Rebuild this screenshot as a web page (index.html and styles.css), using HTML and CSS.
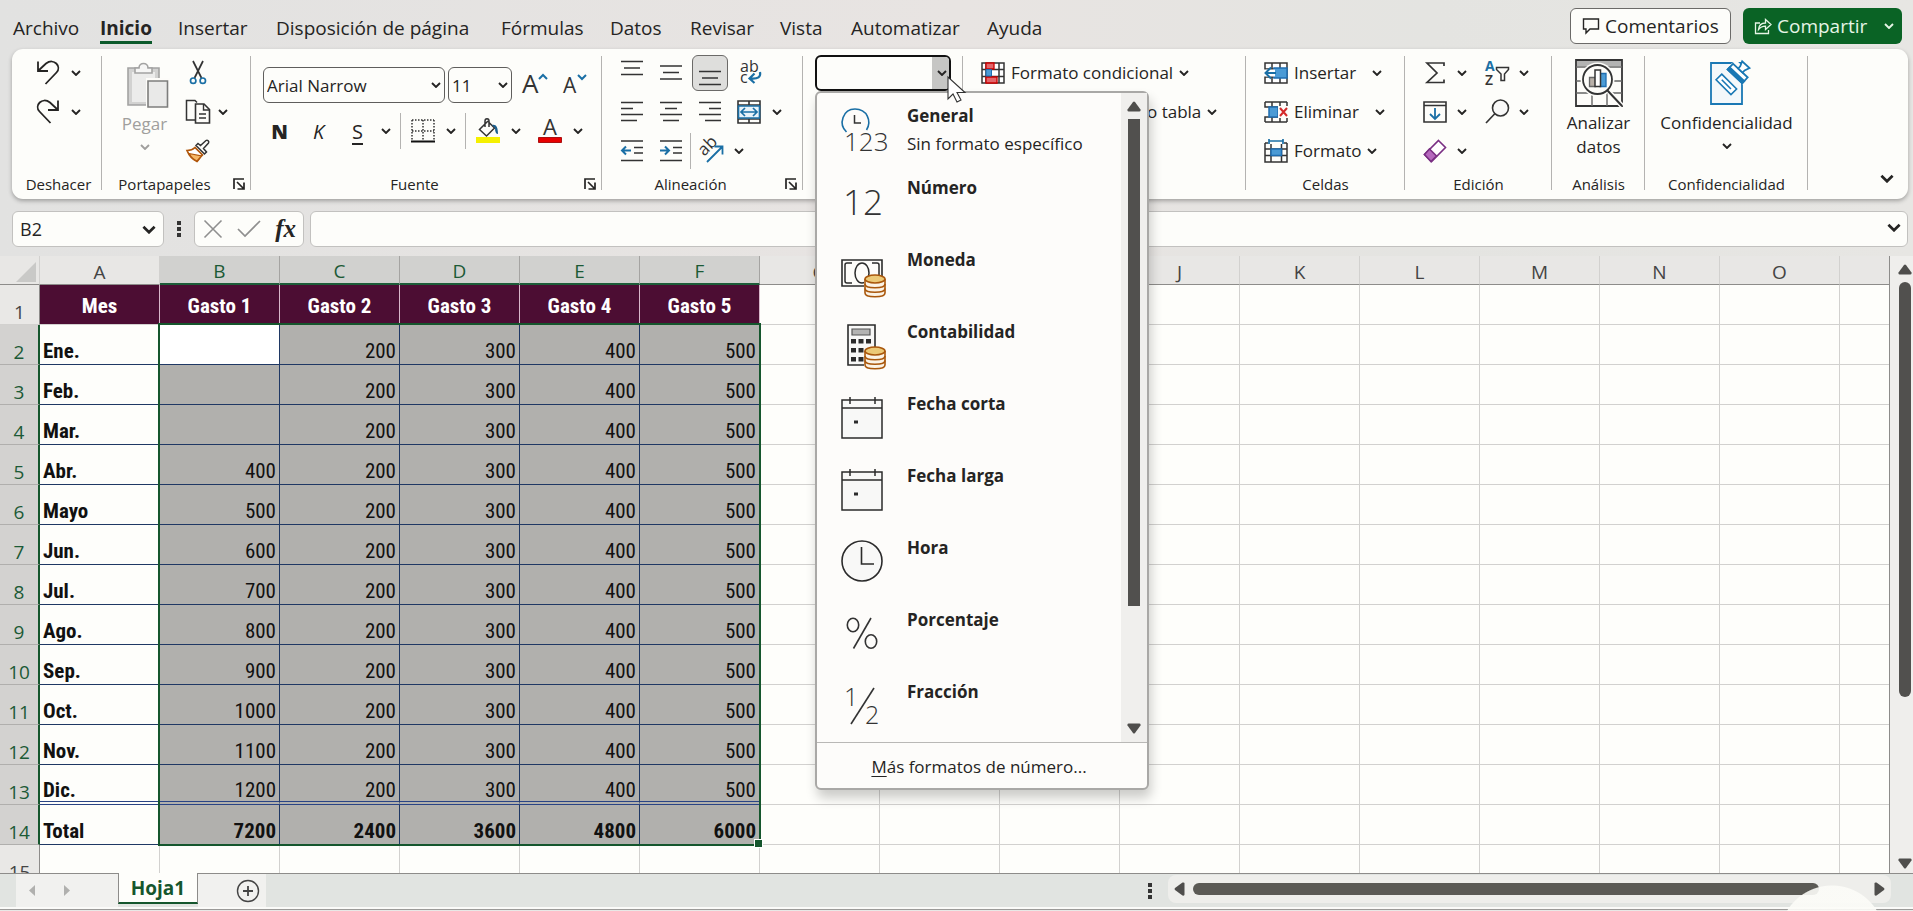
FILE: index.html
```html
<!DOCTYPE html>
<html lang="es">
<head>
  <meta charset="UTF-8" />
  <meta name="viewport" content="width=device-width, initial-scale=1.0" />
  <title>Gastos - Excel</title>
  <link rel="stylesheet" href="styles.css">
</head>
<body>
  <svg class="sprite" width="0" height="0">
    <symbol id="chev" viewBox="0 0 10 6"><path d="M1 1l4 4 4-4" fill="none" stroke="currentColor" stroke-width="1.9"/></symbol>
    <symbol id="launch" viewBox="0 0 12 12"><path d="M1 11V1h10M4 4l6.5 6.5M11 4.500V11H4.500" fill="none" stroke="currentColor" stroke-width="1.7"/></symbol>
    <symbol id="coins" viewBox="0 0 22 24">
      <path d="M1 5v14c0 5 20 5 20 0V5" fill="#fdfcf9" stroke="#fdfcf9" stroke-width="3"/>
      <path d="M1 5v14c0 5 20 5 20 0V5" fill="#fbf3e6" stroke="#a9570c" stroke-width="1.6"/>
      <path d="M1 10c0 5 20 5 20 0M1 14.500c0 5 20 5 20 0" fill="none" stroke="#a9570c" stroke-width="1.6"/>
      <ellipse cx="11" cy="5" rx="10" ry="4" fill="#ecc977" stroke="#a9570c" stroke-width="1.6"/>
    </symbol>
    <symbol id="calendar" viewBox="0 0 46 46">
      <path d="M1 4h40v38H1z" fill="#f8f8f7" stroke="#2b2b2b" stroke-width="1.500"/>
      <path d="M1 12h40M9 1v7M34 1v7" stroke="#2b2b2b" stroke-width="1.500"/>
      <path d="M13 24.500h4v3h-4z" fill="#2b2b2b"/>
    </symbol>
  </svg>

  <header class="topbar">
    <nav class="tabs">
      <a href="#">Archivo</a>
      <a href="#" class="active"><span>Inicio</span></a>
      <a href="#">Insertar</a>
      <a href="#">Disposición de página</a>
      <a href="#">Fórmulas</a>
      <a href="#">Datos</a>
      <a href="#">Revisar</a>
      <a href="#">Vista</a>
      <a href="#">Automatizar</a>
      <a href="#">Ayuda</a>
    </nav>
    <button class="comments">
      <svg width="18" height="18" viewBox="0 0 18 18"><path d="M1.500 2h15v10H8l-4 4v-4H1.500z" fill="none" stroke="currentColor" stroke-width="1.400"/></svg>
      Comentarios
    </button>
    <button class="share">
      <svg width="18" height="18" viewBox="0 0 18 18"><path d="M6 6H1.500v10.500h13V13M4.500 12.500c.5-5 3.500-6.500 7-6.500v-3.500l5.500 5-5.500 5V9.200c-3 0-5 .8-7 3.300z" fill="none" stroke="currentColor" stroke-width="1.300"/></svg>
      Compartir
      <svg class="chev" width="10" height="6"><use href="#chev"/></svg>
    </button>
  </header>

  <section class="ribbon">
    <div class="group g-undo">
      <div class="group-body">
        <div class="row">
          <button class="ico" aria-label="Deshacer"><svg width="24" height="26" viewBox="0 0 24 26"><path d="M2 1.500V11h10M2.500 10.500L10 3.500c8-6 16 3 10.500 9L9.500 24" fill="none" stroke="currentColor" stroke-width="1.800"/></svg></button>
          <button class="drop" aria-label="Más deshacer"><svg class="chev" width="10" height="6"><use href="#chev"/></svg></button>
        </div>
        <div class="row">
          <button class="ico" aria-label="Rehacer"><svg width="24" height="26" viewBox="0 0 24 26"><path d="M22 1.500V11H12M21.500 10.500L14 3.500C6-2.500-2 6.500 3.500 12.500L14.500 24" fill="none" stroke="currentColor" stroke-width="1.800"/></svg></button>
          <button class="drop" aria-label="Más rehacer"><svg class="chev" width="10" height="6"><use href="#chev"/></svg></button>
        </div>
      </div>
      <div class="group-label"><span>Deshacer</span></div>
    </div>

    <div class="group g-clip">
      <div class="group-body side">
        <button class="big disabled">
          <svg width="48" height="46" viewBox="-6 0 48 46">
            <path d="M1 6h31v37H1z" fill="#d2d2d1" stroke="#a3a3a2" stroke-width="1.600"/>
            <path d="M5 10h23v30H5z" fill="#ececeb"/>
            <path d="M8 11V6h4c0-6 9-6 9 0h4v5z" fill="#f6f6f5" stroke="#a3a3a2" stroke-width="1.600"/>
            <path d="M21 18h20v27H21z" fill="#e9e9e8" stroke="#fdfcf9" stroke-width="4"/>
            <path d="M21 19h19.500v26H21z" fill="#e9e9e8" stroke="#7d7d7c" stroke-width="1.600"/>
          </svg>
          <span>Pegar</span>
          <svg class="chev" width="10" height="6"><use href="#chev"/></svg>
        </button>
        <div class="stack">
          <div class="row">
            <button class="ico" aria-label="Cortar"><svg width="18" height="26" viewBox="0 0 18 26"><path d="M4 1l8.500 17M14 1L5.500 18" stroke="#333" stroke-width="1.700"/><g fill="none" stroke="#1a6fa5" stroke-width="1.700"><circle cx="4.200" cy="20.700" r="2.700"/><circle cx="13.800" cy="20.700" r="2.700"/></g></svg></button>
          </div>
          <div class="row">
            <button class="ico" aria-label="Copiar"><svg width="26" height="26" viewBox="0 0 26 26"><path d="M10 21H1.500V1.500H10l2 2" fill="none" stroke="#333" stroke-width="1.500"/><path d="M10.500 5H19l5.500 5.500V24h-14z" fill="#fdfcf9" stroke="#333" stroke-width="1.600"/><path d="M18.500 5v6h6M14 15h7M14 19h7" fill="none" stroke="#333" stroke-width="1.400"/></svg></button>
            <button class="drop" aria-label="Más copiar"><svg class="chev" width="10" height="6"><use href="#chev"/></svg></button>
          </div>
          <div class="row">
            <button class="ico" aria-label="Copiar formato"><svg width="24" height="24" viewBox="0 0 24 24"><path d="M1 11.500c3.500 0 6-1 8-3l7.500 7.500c-2 2-3 3.500-5.500 6.500-4.500-2-8-6-10-11z" fill="#fff" stroke="#b0560a" stroke-width="1.700"/><path d="M3 14.500l12.500 2.500L11 22c-3.500-1.500-6-4-8-7.500z" fill="#f6b868" stroke="#b0560a" stroke-width="1.200"/><path d="M10 6.500l8.500 8.500 2-2-3-3.500 5-5.500c1-1.500-1-3.500-2.500-2.500l-5.500 5-2.500-2z" fill="#fdfcf9" stroke="#333" stroke-width="1.500"/></svg></button>
          </div>
        </div>
      </div>
      <div class="group-label"><span>Portapapeles</span><button class="launch" aria-label="Opciones de portapapeles"><svg width="12" height="12"><use href="#launch"/></svg></button></div>
    </div>

    <div class="group g-font">
      <div class="group-body font-body">
        <div class="font-row first">
          <div class="combo font-name">
            <input type="text" value="Arial Narrow" aria-label="Fuente">
            <button aria-label="Lista de fuentes"><svg class="chev" width="10" height="6"><use href="#chev"/></svg></button>
          </div>
          <div class="combo font-size">
            <input type="text" value="11" aria-label="Tamaño">
            <button aria-label="Lista de tamaños"><svg class="chev" width="10" height="6"><use href="#chev"/></svg></button>
          </div>
          <button class="ico" aria-label="Aumentar fuente"><svg width="28" height="26" viewBox="0 0 28 26"><text x="1" y="21" font-size="26">A</text><path d="M18 7l4-4 4 4" fill="none" stroke="#1a6fa5" stroke-width="2"/></svg></button>
          <button class="ico" aria-label="Reducir fuente"><svg width="28" height="26" viewBox="0 0 28 26"><text x="3" y="21" font-size="21">A</text><path d="M18 3l4 4 4-4" fill="none" stroke="#1a6fa5" stroke-width="2"/></svg></button>
        </div>
        <div class="font-row">
          <button class="ico letter bold">N</button>
          <button class="ico letter italic">K</button>
          <button class="ico letter under">S</button>
          <button class="drop" aria-label="Más subrayado"><svg class="chev" width="10" height="6"><use href="#chev"/></svg></button>
          <i class="sep"></i>
          <button class="ico" aria-label="Bordes"><svg width="24" height="24" viewBox="0 0 24 24"><path d="M1 1h22M1 12h22M1 1v20M12 1v20M23 1v20" stroke="#333" stroke-width="1.500" stroke-dasharray="1.500 1.500"/><path d="M0 22.500h24" stroke="#111" stroke-width="2"/></svg></button>
          <button class="drop" aria-label="Más bordes"><svg class="chev" width="10" height="6"><use href="#chev"/></svg></button>
          <i class="sep"></i>
          <button class="ico" aria-label="Color de relleno"><svg width="26" height="26" viewBox="0 0 26 26"><path d="M13 3L4.500 11.500l7 6.500 8-8-6-6M10 9V3c0-3 4-3 4 0v6" fill="none" stroke="#333" stroke-width="1.500"/><path d="M17 7c4-1 6 2 6 9-2 0-3-2-3-6z" fill="#1a5f8f"/><path d="M1 19h24v6H1z" fill="#f5f000"/></svg></button>
          <button class="drop" aria-label="Más colores de relleno"><svg class="chev" width="10" height="6"><use href="#chev"/></svg></button>
          <button class="ico shifted" aria-label="Color de fuente"><svg width="26" height="26" viewBox="0 0 26 26"><text x="6" y="17" font-size="22">A</text><path d="M1.500 19.500h23v5h-23z" fill="#e80000" stroke="#a11" stroke-width="1"/></svg></button>
          <button class="drop" aria-label="Más colores de fuente"><svg class="chev" width="10" height="6"><use href="#chev"/></svg></button>
        </div>
      </div>
      <div class="group-label"><span>Fuente</span><button class="launch" aria-label="Opciones de fuente"><svg width="12" height="12"><use href="#launch"/></svg></button></div>
    </div>

    <div class="group g-align">
      <div class="group-body">
        <div class="row">
          <button class="ico" aria-label="Alinear arriba"><svg width="24" height="26" viewBox="0 0 24 26"><path d="M1 1.500h22M4 8h16M1 14.500h22" stroke="#333" stroke-width="1.700"/></svg></button>
          <button class="ico" aria-label="Alinear al medio"><svg width="24" height="26" viewBox="0 0 24 26"><path d="M1 6h22M4 12.500h16M1 19h22" stroke="#333" stroke-width="1.700"/></svg></button>
          <button class="ico pressed" aria-label="Alinear abajo"><svg width="24" height="26" viewBox="0 0 24 26"><path d="M1 11.500h22M4 18h16M1 24.500h22" stroke="#333" stroke-width="1.700"/></svg></button>
          <button class="ico" aria-label="Ajustar texto"><svg width="26" height="26" viewBox="0 0 26 26"><text x="4" y="12" font-size="16">ab</text><text x="4" y="23" font-size="16">c</text><path d="M24 12c1 5-2 7-9 6.500M18.500 13.500L13.500 18.500l5 4.500" fill="none" stroke="#1a6fa5" stroke-width="2.200"/></svg></button>
        </div>
        <div class="row">
          <button class="ico" aria-label="Alinear a la izquierda"><svg width="24" height="24" viewBox="0 0 24 24"><path d="M1 2.500h22M1 8.500h12M1 14.500h22M1 20.500h16" stroke="#333" stroke-width="1.700"/></svg></button>
          <button class="ico" aria-label="Centrar"><svg width="24" height="24" viewBox="0 0 24 24"><path d="M1 2.500h22M6 8.500h12M1 14.500h22M4 20.500h16" stroke="#333" stroke-width="1.700"/></svg></button>
          <button class="ico" aria-label="Alinear a la derecha"><svg width="24" height="24" viewBox="0 0 24 24"><path d="M1 2.500h22M11 8.500h12M1 14.500h22M7 20.500h16" stroke="#333" stroke-width="1.700"/></svg></button>
          <button class="ico" aria-label="Combinar y centrar"><svg width="24" height="24" viewBox="0 0 24 24"><path d="M1 1h22v22H1zM1 5h22M1 19h22M12 1v4M12 19v4" fill="none" stroke="#333" stroke-width="1.600"/><path d="M1.500 6h21v12h-21z" fill="#e9f3fa" stroke="#1a6fa5" stroke-width="1.600"/><path d="M4.500 12h15M8 8l-4 4 4 4M16 8l4 4-4 4" fill="none" stroke="#1a6fa5" stroke-width="1.700"/></svg></button>
          <button class="drop" aria-label="Más combinar"><svg class="chev" width="10" height="6"><use href="#chev"/></svg></button>
        </div>
        <div class="row">
          <button class="ico" aria-label="Disminuir sangría"><svg width="24" height="24" viewBox="0 0 24 24"><path d="M1 2h22M14 8.500h9M14 14h9M1 21.500h22" stroke="#333" stroke-width="1.700"/><path d="M11 11.500H2M6 7.500l-4 4 4 4" fill="none" stroke="#1a6fa5" stroke-width="2"/></svg></button>
          <button class="ico" aria-label="Aumentar sangría"><svg width="24" height="24" viewBox="0 0 24 24"><path d="M1 2h22M14 8.500h9M14 14h9M1 21.500h22" stroke="#333" stroke-width="1.700"/><path d="M1 11.500h9M6 7.500l4 4-4 4" fill="none" stroke="#1a6fa5" stroke-width="2"/></svg></button>
          <i class="sep"></i>
          <button class="ico" aria-label="Orientación"><svg width="24" height="26" viewBox="2 0 24 26"><text transform="rotate(-45 8 18)" x="7" y="18" font-size="17">ab</text><path d="M10 24L25 9M17.500 8.500H25.500v8" fill="none" stroke="#1a6fa5" stroke-width="1.800"/></svg></button>
          <button class="drop" aria-label="Más orientación"><svg class="chev" width="10" height="6"><use href="#chev"/></svg></button>
        </div>
      </div>
      <div class="group-label"><span>Alineación</span><button class="launch" aria-label="Opciones de alineación"><svg width="12" height="12"><use href="#launch"/></svg></button></div>
    </div>

    <div class="group g-number">
      <div class="number-picker">
        <div class="combo open">
          <input type="text" value="" aria-label="Formato de número">
          <button aria-label="Lista de formatos"><svg class="chev" width="10" height="6"><use href="#chev"/></svg></button>
        </div>
        <div class="menu">
          <div class="menu-main">
            <ul>
              <li><button>
                <svg width="46" height="46" viewBox="0 0 46 46"><path d="M5.500 24C-3 16 2 1 14 1s17 12 11.500 21" fill="none" stroke="#1a6fa5" stroke-width="1.600"/><path d="M13.500 7v8H20" fill="none" stroke="#333" stroke-width="1.500"/><text x="3" y="43" font-size="26" class="thin">123</text></svg>
                <span><b>General</b>Sin formato específico</span>
              </button></li>
              <li><button>
                <svg width="46" height="46" viewBox="0 0 46 46"><text x="2" y="35" font-size="35" class="thin">12</text></svg>
                <span><b>Número</b></span>
              </button></li>
              <li><button>
                <svg width="46" height="46" viewBox="0 0 46 46"><path d="M1 8h40v26H1z" fill="#fdfcf9" stroke="#2b2b2b" stroke-width="1.600"/><path d="M11 11H6c-1 0-2 1-2 2v16c0 1 1 2 2 2h5M31 11h5c1 0 2 1 2 2v12" fill="none" stroke="#2b2b2b" stroke-width="1.500"/><ellipse cx="21" cy="21" rx="7" ry="10" fill="none" stroke="#2b2b2b" stroke-width="1.500"/><use href="#coins" x="23" y="22" width="22" height="24"/></svg>
                <span><b>Moneda</b></span>
              </button></li>
              <li><button>
                <svg width="46" height="46" viewBox="0 0 46 46"><path d="M7 1h27v40H7z" fill="#f8f8f7" stroke="#2b2b2b" stroke-width="1.600"/><path d="M11 5h18v6H11z" fill="#b3b3b2" stroke="#555" stroke-width="1.200"/><path d="M10 15h5v4.500h-5zM17.500 15h5v4.500h-5zM25 15h5v4.500h-5zM10 24h5v4.500h-5zM17.500 24h5v4.500h-5zM10 33h5v4.500h-5zM17.500 33h5v4.500h-5z" fill="#2b2b2b"/><use href="#coins" x="23" y="22" width="22" height="24"/></svg>
                <span><b>Contabilidad</b></span>
              </button></li>
              <li><button>
                <svg width="46" height="46"><use href="#calendar"/></svg>
                <span><b>Fecha corta</b></span>
              </button></li>
              <li><button>
                <svg width="46" height="46"><use href="#calendar"/></svg>
                <span><b>Fecha larga</b></span>
              </button></li>
              <li><button>
                <svg width="46" height="46" viewBox="0 0 46 46"><circle cx="21" cy="21" r="20" fill="#f8f8f7" stroke="#2b2b2b" stroke-width="1.600"/><path d="M20.500 7v17H33" fill="none" stroke="#2b2b2b" stroke-width="1.600"/></svg>
                <span><b>Hora</b></span>
              </button></li>
              <li><button>
                <svg width="46" height="46" viewBox="0 0 46 46"><g fill="none" stroke="#333" stroke-width="1.600"><ellipse cx="12" cy="13" rx="5.700" ry="6.700"/><ellipse cx="30" cy="29.500" rx="5.700" ry="6.700"/><path d="M30 6L12.500 36.500"/></g></svg>
                <span><b>Porcentaje</b></span>
              </button></li>
              <li><button>
                <svg width="46" height="46" viewBox="0 0 46 46"><text x="3" y="22" font-size="25" class="thin">1</text><text x="24" y="40" font-size="25" class="thin">2</text><path d="M33 4L10 40" stroke="#333" stroke-width="1.600"/></svg>
                <span><b>Fracción</b></span>
              </button></li>
            </ul>
            <div class="menu-scroll">
              <svg width="14" height="11" viewBox="0 0 14 11"><path d="M6 1q1-1 2 0l5.500 7.500q.5 2-1 2h-11q-1.500 0-1-2z" fill="#4f4e4c"/></svg>
              <div class="menu-thumb"></div>
              <svg width="14" height="11" viewBox="0 0 14 11"><path d="M6 10q1 1 2 0l5.500-7.500q.5-2-1-2h-11q-1.500 0-1 2z" fill="#4f4e4c"/></svg>
            </div>
          </div>
          <button class="menu-more"><u>M</u>ás formatos de número...</button>
        </div>
      </div>
    </div>

    <div class="group g-styles">
      <div class="group-body">
        <button class="row cmd">
          <svg width="24" height="22" viewBox="0 0 24 22"><path d="M1 1h22v20H1zM1 7.500h22M1 14.500h22M5 1v20M18 1v20" fill="#fff" stroke="#333" stroke-width="1.500"/><path d="M5 1h8v6H5zM5 15h11v6H5z" fill="#e2666a" stroke="#c00" stroke-width="1.300"/><path d="M5 7.500h5.500v6.500H5z" fill="#4b9bd5" stroke="#1f6db0"/></svg>
          Formato condicional
          <svg class="chev" width="10" height="6"><use href="#chev"/></svg>
        </button>
        <button class="row cmd">
          <svg width="24" height="22" viewBox="0 0 24 22"><path d="M1 1h22v20H1zM1 7.500h22M1 14.500h22M8 1v20M16 1v20" fill="#fff" stroke="#333" stroke-width="1.500"/></svg>
          Dar formato como tabla
          <svg class="chev" width="10" height="6"><use href="#chev"/></svg>
        </button>
      </div>
      <div class="group-label"><span>Estilos</span></div>
    </div>

    <div class="group g-cells">
      <div class="group-body">
        <button class="row cmd split">
          <svg width="24" height="22" viewBox="0 0 24 22"><path d="M1 1h22v20H1zM1 7h22M1 15h22M8 1v20M16 1v20" fill="#fff" stroke="#333" stroke-width="1.500"/><path d="M10 6h13v10H10z" fill="#4b9bd5" stroke="#1f6db0" stroke-width="1.500"/><path d="M0 11h11" stroke="#fff" stroke-width="7"/><path d="M2 11h10M7 5.500L1.500 11 7 16.500" fill="none" stroke="#1a6fa5" stroke-width="2"/></svg>
          Insertar
          <svg class="chev" width="10" height="6"><use href="#chev"/></svg>
        </button>
        <button class="row cmd split">
          <svg width="24" height="22" viewBox="0 0 24 22"><path d="M1 1h22M1 21h22M1 1v5h22V1M1 21v-5h22v5M8 1v5M16 1v5M8 16v5M16 16v5" fill="none" stroke="#333" stroke-width="1.500"/><path d="M5 6h9v10H5z" fill="#4b9bd5" stroke="#1f6db0" stroke-width="1.500"/><path d="M14 5h10v12H14z" fill="#fdfcf9"/><path d="M16 7l7 8M23 7l-7 8" stroke="#d42a2a" stroke-width="2"/></svg>
          Eliminar
          <svg class="chev" width="10" height="6"><use href="#chev"/></svg>
        </button>
        <button class="row cmd">
          <svg width="24" height="24" viewBox="0 0 24 24"><path d="M1 4v19h22V4M1 10h22M1 16.500h22M7 5v18M17.500 5v18M1 4h3M20 4h3" fill="none" stroke="#333" stroke-width="1.500"/><path d="M7 10h10.500v6.500H7z" fill="#4b9bd5" stroke="#1f6db0" stroke-width="1.500"/><path d="M5 2h14M5 0v5M19 0v5" stroke="#1a6fa5" stroke-width="1.700"/></svg>
          Formato
          <svg class="chev" width="10" height="6"><use href="#chev"/></svg>
        </button>
      </div>
      <div class="group-label"><span>Celdas</span></div>
    </div>

    <div class="group g-edit">
      <div class="group-body">
        <div class="row">
          <button class="ico" aria-label="Autosuma"><svg width="22" height="24" viewBox="0 0 22 24"><path d="M20 5V2H3l10 10L3 21.500h17v-3" fill="none" stroke="#333" stroke-width="1.700"/></svg></button>
          <button class="drop" aria-label="Más autosuma"><svg class="chev" width="10" height="6"><use href="#chev"/></svg></button>
          <button class="ico second" aria-label="Ordenar y filtrar"><svg width="26" height="26" viewBox="0 0 26 26"><text x="1" y="11" font-size="14" font-weight="700" class="accent">A</text><text x="1" y="25" font-size="14" font-weight="600">Z</text><path d="M12.500 7.500h12v2l-4 4.500v6.500h-3.500V14l-4.500-4.500z" fill="none" stroke="#333" stroke-width="1.500"/></svg></button>
          <button class="drop" aria-label="Más ordenar"><svg class="chev" width="10" height="6"><use href="#chev"/></svg></button>
        </div>
        <div class="row">
          <button class="ico" aria-label="Rellenar"><svg width="24" height="22" viewBox="0 0 24 22"><path d="M1 1h22v20H1zM1 4.500h22" fill="none" stroke="#333" stroke-width="1.600"/><path d="M12 7v11M7 13l5 5 5-5" fill="none" stroke="#1a6fa5" stroke-width="1.800"/></svg></button>
          <button class="drop" aria-label="Más rellenar"><svg class="chev" width="10" height="6"><use href="#chev"/></svg></button>
          <button class="ico second" aria-label="Buscar y seleccionar"><svg width="26" height="26" viewBox="0 0 26 26"><circle cx="16.500" cy="9" r="8" fill="#f8f8f7" stroke="#333" stroke-width="1.600"/><path d="M11 14.500L2 24" stroke="#333" stroke-width="1.700"/></svg></button>
          <button class="drop" aria-label="Más buscar"><svg class="chev" width="10" height="6"><use href="#chev"/></svg></button>
        </div>
        <div class="row">
          <button class="ico" aria-label="Borrar"><svg width="24" height="24" viewBox="0 0 24 24"><path d="M15.500 1.500l7 7-14 14-7-7z" fill="#fff" stroke="#7a2f83" stroke-width="1.600"/><path d="M6.500 10l7 7-5.500 5.500-6.500-7z" fill="#b569bd" stroke="#7a2f83" stroke-width="1.600"/></svg></button>
          <button class="drop" aria-label="Más borrar"><svg class="chev" width="10" height="6"><use href="#chev"/></svg></button>
        </div>
      </div>
      <div class="group-label"><span>Edición</span></div>
    </div>

    <div class="group g-analysis">
      <div class="group-body side">
        <button class="big">
          <svg width="48" height="48" viewBox="0 0 48 48">
            <path d="M1 1h46v46H1z" fill="#fdfcf9" stroke="#333" stroke-width="1.800"/>
            <path d="M2 2h44v5H2z" fill="#b3b3b2"/>
            <path d="M1 8h46M1 22h46M1 34h46M17 34v13M32 34v13" stroke="#666" stroke-width="1.400"/>
            <circle cx="22.500" cy="20.500" r="17" fill="#fdfcf9"/>
            <path d="M34 33l13 14" stroke="#fdfcf9" stroke-width="5"/>
            <circle cx="22.500" cy="20.500" r="14.500" fill="#fdfcf9" stroke="#333" stroke-width="1.800"/>
            <path d="M32.500 31.500L47 47" stroke="#333" stroke-width="2"/>
            <path d="M14.500 18.500h6v9h-6z" fill="#b8b0a8" stroke="#666" stroke-width="1.300"/>
            <path d="M25 14.500h6v13h-6z" fill="#4b9bd5" stroke="#1f6db0" stroke-width="1.300"/>
            <path d="M20 11h5.500v16.500H20z" fill="#fff" stroke="#333" stroke-width="1.500"/>
          </svg>
          <span>Analizar<br>datos</span>
        </button>
      </div>
      <div class="group-label"><span>Análisis</span></div>
    </div>

    <div class="group g-conf">
      <div class="group-body side">
        <button class="big">
          <svg width="48" height="48" viewBox="0 0 48 48">
            <path d="M8 4h31v41H8z" fill="#f4f8fa" stroke="#1a78b4" stroke-width="1.800"/>
            <path d="M24 8l9-7 15 14-7 12z" fill="#fdfcf9"/>
            <g transform="rotate(45 23 25)" fill="#fff" stroke="#1a78b4" stroke-width="1.600"><path d="M13 21h21v8H13zM17 25h13"/></g>
            <g transform="rotate(43 36 13)" fill="#fff" stroke="#1a78b4" stroke-width="1.800"><path d="M26 11h20v8H26z"/><path d="M26 16h20v3H26z" fill="#1a78b4"/><path d="M33 11V8l-2-5h10l-2 5v3z"/></g>
          </svg>
          <span>Confidencialidad</span>
          <svg class="chev" width="10" height="6"><use href="#chev"/></svg>
        </button>
      </div>
      <div class="group-label"><span>Confidencialidad</span></div>
    </div>

    <button class="collapse" aria-label="Contraer la cinta"><svg width="14" height="9"><use href="#chev"/></svg></button>
  </section>

  <section class="formula-bar">
    <div class="name-box">
      <input type="text" value="B2" aria-label="Cuadro de nombres">
      <button aria-label="Nombres"><svg width="14" height="9"><use href="#chev"/></svg></button>
    </div>
    <span class="dots"></span>
    <div class="fx-box">
      <button aria-label="Cancelar"><svg width="20" height="20" viewBox="0 0 20 20"><path d="M1.500 1.500l17 17M18.500 1.500l-17 17" stroke="#8f8f8f" stroke-width="1.600"/></svg></button>
      <button aria-label="Aceptar"><svg width="24" height="20" viewBox="0 0 24 20"><path d="M1 10l7 7L23 2" fill="none" stroke="#8f8f8f" stroke-width="1.700"/></svg></button>
      <button class="fx" aria-label="Insertar función">fx</button>
    </div>
    <div class="formula-input">
      <input type="text" aria-label="Barra de fórmulas">
      <button aria-label="Expandir"><svg width="14" height="9"><use href="#chev"/></svg></button>
    </div>
  </section>

  <main class="workspace">
    <div class="sheet">
      <table>
        <thead>
          <tr>
            <th class="corner"><svg width="20" height="20" viewBox="0 0 20 20"><path d="M20 0v20H0z" fill="#c9c9c7"/></svg></th>
            <th>A</th><th class="on">B</th><th class="on">C</th><th class="on">D</th><th class="on">E</th><th class="on">F</th>
            <th>G</th><th>H</th><th>I</th><th>J</th><th>K</th><th>L</th><th>M</th><th>N</th><th>O</th><th></th>
          </tr>
        </thead>
        <tbody id="rows"></tbody>
      </table>
      <div class="selection"></div>
    </div>
    <div class="vscroll">
      <svg width="14" height="11" viewBox="0 0 14 11"><path d="M6 1q1-1 2 0l5.500 7.500q.5 2-1 2h-11q-1.500 0-1-2z" fill="#4f4e4c"/></svg>
      <div class="vtrack"><div class="vthumb"></div></div>
      <svg width="14" height="11" viewBox="0 0 14 11"><path d="M6 10q1 1 2 0l5.500-7.500q.5-2-1-2h-11q-1.500 0-1 2z" fill="#4f4e4c"/></svg>
    </div>
  </main>

  <footer class="sheet-bar">
    <div class="sheet-nav">
      <button aria-label="Hoja anterior"><svg width="6" height="11" viewBox="0 0 6 11"><path d="M6 0v11L0 5.500z" fill="#b0b0ae"/></svg></button>
      <button aria-label="Hoja siguiente"><svg width="6" height="11" viewBox="0 0 6 11"><path d="M0 0v11l6-5.500z" fill="#b0b0ae"/></svg></button>
    </div>
    <button class="sheet-tab">Hoja1</button>
    <button class="sheet-add" aria-label="Hoja nueva"><svg width="24" height="24" viewBox="0 0 24 24"><circle cx="12" cy="12" r="10.500" fill="none" stroke="#444" stroke-width="1.400"/><path d="M12 7v10M7 12h10" stroke="#444" stroke-width="1.800"/></svg></button>
    <span class="dots"></span>
    <div class="hscroll">
      <svg width="11" height="14" viewBox="0 0 11 14"><path d="M1 6q-1 1 0 2l7.500 5.500q2 .5 2-1v-11q0-1.500-2-1z" fill="#4f4e4c"/></svg>
      <div class="htrack"><div class="hthumb"></div></div>
      <svg width="11" height="14" viewBox="0 0 11 14"><path d="M10 6q1 1 0 2L2.500 13.500q-2 .5-2-1v-11q0-1.500 2-1z" fill="#4f4e4c"/></svg>
    </div>
  </footer>
  <div class="edge"></div>
  <div class="bubble"></div>
  <svg class="pointer" width="20" height="28" viewBox="0 0 20 28"><path d="M1 1v22l5-5 4 8 4-2-4-7.500h8z" fill="#fff" stroke="#333" stroke-width="1.100"/></svg>

  <script>
    const meses = ["Ene.", "Feb.", "Mar.", "Abr.", "Mayo", "Jun.", "Jul.", "Ago.", "Sep.", "Oct.", "Nov.", "Dic."];
    const gasto1 = ["", "", "", 400, 500, 600, 700, 800, 900, 1000, 1100, 1200];

    const filas = [["Mes", "Gasto 1", "Gasto 2", "Gasto 3", "Gasto 4", "Gasto 5"]];
    meses.forEach((mes, i) => filas.push([mes, gasto1[i], 200, 300, 400, 500]));
    filas.push(["Total", 7200, 2400, 3600, 4800, 6000]);
    filas.push([]);

    const clases = { 0: "title", 12: "last", 13: "total", 14: "blank" };

    document.getElementById("rows").innerHTML = filas.map((fila, i) => {
      let celdas = "";
      for (let c = 0; c < 16; c++) {
        celdas += `<td>${fila[c] ?? ""}</td>`;
      }
      return `<tr class="${clases[i] || "data"}"><th>${i + 1}</th>${celdas}</tr>`;
    }).join("");
  </script>
</body>
</html>
```
FILE: styles.css
```css
:root {
  --text: #252423;
  --paper: #fdfdfa;
  --line: #b4b3b1;
  --green: #15562d;
  --blue: #1f3864;
  --wine: #4c0d33;
}

* {
  box-sizing: border-box;
}

body {
  margin: 0;
  height: 100vh;
  display: flex;
  flex-direction: column;
  overflow: hidden;
  font-family: "Open Sans", "Noto Sans", sans-serif;
  font-size: 17px;
  color: var(--text);
  background: linear-gradient(90deg, #e2e2e1, #e8e4e2 50%, #e4e4e1 75%, #e7e6e3);
}

button, input {
  font: inherit;
  color: inherit;
  background: none;
  border: none;
  padding: 0;
  margin: 0;
  outline: none;
}

button {
  cursor: pointer;
}

svg {
  display: block;
  flex: none;
  overflow: visible;
}

.sprite {
  position: absolute;
}

svg text {
  fill: #333;
}

svg .accent {
  fill: #1a6fa5;
}

svg .thin {
  font-weight: 300;
}

/* tabs */
.topbar {
  height: 49px;
  flex: none;
  display: flex;
  align-items: flex-start;
  gap: 12px;
  padding: 8px 11px 0 13px;
}

.tabs {
  flex: 1;
  display: grid;
  grid-template-columns: 87px 78px 98px 225px 109px 80px 90px 71px 136px auto;
  font-size: 19px;
  line-height: 40px;
  white-space: nowrap;
}

.tabs a {
  color: inherit;
  text-decoration: none;
}

.tabs .active span {
  display: inline-block;
  line-height: 36px;
  height: 36px;
  padding-top: 2px;
  font-weight: 700;
  box-shadow: inset 0 -3px #0b5a2b;
}

.comments, .share {
  height: 36px;
  display: flex;
  align-items: center;
  gap: 5px;
  border-radius: 6px;
  font-size: 19px;
}

.comments {
  width: 161px;
  padding: 0 11px;
  background: var(--paper);
  border: 1px solid #6b6a68;
}

.share {
  width: 159px;
  padding: 0 11px;
  background: #0a6325;
  color: #e6f5e6;
}

.share .chev {
  margin-left: auto;
  margin-right: -3px;
}

/* ribbon */
.ribbon {
  flex: none;
  height: 150px;
  margin: 0 5px 0 12px;
  padding: 4px 0 0;
  display: flex;
  background: var(--paper);
  border-radius: 11px;
  box-shadow: 0 2px 4px rgba(0, 0, 0, 0.3);
}

.group {
  flex: none;
  display: flex;
  flex-direction: column;
  background: linear-gradient(var(--line), var(--line)) right 3px / 1px 134px no-repeat;
}

.g-undo { width: 90px; }
.g-clip { width: 149px; }
.g-font { width: 351px; }
.g-align { width: 201px; }
.g-number { width: 160px; }
.g-styles { width: 283px; }
.g-cells { width: 159px; }
.g-edit { width: 147px; }
.g-analysis { width: 93px; }
.g-conf { width: 163px; }

.group-body {
  height: 117px;
}

.g-undo .group-body { padding-left: 16px; }
.g-clip .group-body { padding-left: 9px; }
.g-align .group-body { padding-left: 10px; }
.g-styles .group-body { padding-left: 18px; }
.g-cells .group-body { padding-left: 18px; }
.g-edit .group-body { padding-left: 10px; }

.side {
  display: flex;
}

.row {
  height: 39px;
  display: flex;
  align-items: center;
}

.ico {
  width: 39px;
  height: 36px;
  display: flex;
  align-items: center;
  justify-content: center;
}

.pressed {
  background: #dededc;
  border: 1px solid #6b6a68;
  border-radius: 6px;
  width: 36px;
  margin: 0 1px 0 2px;
}

.drop {
  width: 17px;
  height: 36px;
  display: flex;
  align-items: center;
  justify-content: center;
}

.g-clip .drop {
  width: 12px;
}

.g-edit .drop {
  width: 15px;
}

.second {
  margin-left: 8px;
}

.shifted {
  margin-left: 5px;
}

.sep {
  width: 1px;
  height: 36px;
  background: var(--line);
  margin: 0 2px 0 5px;
}

.font-row .drop {
  width: 18px;
}

.g-align .sep {
  margin: 0;
}

.group-label {
  height: 28px;
  display: flex;
  align-items: center;
  font-size: 15px;
}

.group-label span {
  flex: 1;
  text-align: center;
}

.g-undo .group-label {
  padding-left: 3px;
}

.launch {
  width: 24px;
  display: flex;
  justify-content: center;
}

.big {
  width: 100%;
  padding-top: 6px;
  display: flex;
  flex-direction: column;
  align-items: center;
  line-height: 24px;
}

.big span {
  margin: 4px 0 8px;
}

.g-clip .big {
  width: 67px;
  padding-top: 9px;
  flex: none;
}

.disabled {
  color: #a09f9d;
}

.cmd {
  gap: 6px;
  white-space: nowrap;
}

.cmd.split .chev {
  margin-left: 10px;
}

.font-body {
  padding-top: 14px;
  display: flex;
  flex-direction: column;
  gap: 10px;
}

.font-row {
  display: flex;
  align-items: center;
  height: 36px;
  padding-left: 9px;
}

.font-row.first {
  padding-left: 12px;
}

.letter {
  font-size: 20px;
}

.bold {
  font-weight: 800;
}

.italic {
  font-style: italic;
}

.under {
  text-decoration: underline;
  text-underline-offset: 4px;
}

.combo {
  display: flex;
  align-items: center;
  height: 36px;
  border: 1px solid #5f5e5c;
  border-radius: 6px;
  overflow: hidden;
}

.combo input {
  flex: 1;
  min-width: 0;
  padding-left: 3px;
}

.combo button {
  width: 17px;
  height: 100%;
  display: flex;
  align-items: center;
  justify-content: center;
}

.font-name {
  width: 182px;
  margin-right: 3px;
}

.font-size {
  width: 64px;
  margin-right: 3px;
}

/* number format list */
.number-picker {
  position: relative;
  width: 136px;
  margin: 2px 0 0 12px;
}

.combo.open {
  border: 2px solid #111;
}

.combo.open button {
  padding-left: 3px;
  background: #c6c6c4;
}

.menu {
  position: absolute;
  z-index: 5;
  left: 0;
  top: 36px;
  width: 334px;
  background: #fdfcfa;
  border: 2px solid #a9a8a6;
  border-radius: 6px;
  box-shadow: 2px 8px 12px rgba(0, 0, 0, 0.2);
}

.menu-main {
  display: flex;
  border-bottom: 1px solid #b9b8b6;
}

.menu ul {
  flex: 1;
  list-style: none;
  margin: 0;
  padding: 0 0 1px;
}

.menu li button {
  width: 100%;
  height: 72px;
  display: flex;
  gap: 20px;
  padding: 15px 0 0 24px;
  text-align: left;
}

.menu li span {
  line-height: 28px;
  margin-top: -6px;
}

.menu li b {
  display: block;
}

.menu-scroll {
  width: 26px;
  background: #f0efed;
  display: flex;
  flex-direction: column;
  align-items: center;
  padding: 8px 0;
}

.menu-thumb {
  width: 12px;
  height: 487px;
  margin: 7px 0 auto;
  background: #51504e;
}

.menu-more {
  width: 100%;
  height: 45px;
  padding: 1px 6px 0 0;
}

.menu-more u {
  text-underline-offset: 3px;
}

.collapse {
  margin: auto 14px 16px auto;
}

/* formula bar */
.formula-bar {
  flex: none;
  height: 36px;
  margin: 12px 5px 9px 12px;
  display: flex;
}

.name-box, .fx-box, .formula-input {
  display: flex;
  align-items: center;
  background: var(--paper);
  border: 1px solid #c2c1bf;
  border-radius: 6px;
}

.name-box {
  width: 152px;
  padding: 0 7px;
  font-size: 18px;
}

.name-box input, .formula-input input {
  flex: 1;
  min-width: 0;
}

.dots {
  width: 4px;
  height: 16px;
  background: repeating-linear-gradient(#333 0 4px, transparent 4px 6px);
}

.formula-bar .dots {
  margin: 10px 13px;
}

.fx-box {
  width: 110px;
  justify-content: space-between;
  padding: 0 7px 0 8px;
}

.fx {
  font: italic bold 25px/30px "Liberation Serif", serif;
}

.formula-input {
  flex: 1;
  margin-left: 6px;
  padding: 0 6px 0 8px;
}

.formula-input button {
  padding-bottom: 4px;
}

/* grid */
.workspace {
  flex: 1;
  min-height: 0;
  display: flex;
}

.sheet {
  flex: 1;
  min-width: 0;
  position: relative;
  overflow: hidden;
  background: #fefefb;
  border-right: 1px solid #8d8c8a;
}

table {
  width: 1960px;
  table-layout: fixed;
  border-collapse: separate;
  border-spacing: 0;
}

th, td {
  padding: 0;
  border-right: 1px solid #d2d1cf;
  border-bottom: 1px solid #d2d1cf;
}

thead th {
  width: 120px;
  height: 29px;
  padding-top: 3px;
  font-size: 19px;
  line-height: 24px;
  font-weight: 400;
  color: #444;
  background: #e8e7e5;
  border-bottom-color: #8d8c8a;
}

thead th.corner {
  width: 40px;
  padding-left: 16px;
}

thead th.on {
  color: #1c5a36;
  background: #d1d1cf;
  border-right-color: #a5a4a2;
  border-bottom: 2px solid #1d5c39;
}

tbody th {
  height: 40px;
  font-size: 19px;
  line-height: 24px;
  font-weight: 400;
  vertical-align: bottom;
  color: #444;
  background: #e9e8e6;
  border-right-color: #8d8c8a;
}

tbody td {
  font-family: "Arial Narrow", "Liberation Sans Narrow", "Roboto Condensed", "Liberation Sans", sans-serif;
  font-size: 21px;
  line-height: 26px;
  color: #111;
  text-align: right;
  vertical-align: bottom;
  padding-right: 3px;
}

.data th, .last th, .total th {
  color: #1c5a36;
  background: #d3d2d0;
  border-bottom-color: #b0afad;
  border-right: 2px solid var(--green);
}

.title td:nth-child(-n+7) {
  color: #fff;
  background: var(--wine);
  font-weight: 700;
  text-align: center;
  vertical-align: middle;
  padding: 2px 0 0;
  border-right-color: #d9b7cb;
}

.data td:nth-child(-n+7), .last td:nth-child(-n+7), .total td:nth-child(-n+7) {
  background: #b1b0ad;
  border-color: var(--blue);
}

.data td:nth-child(2), .last td:nth-child(2), .total td:nth-child(2) {
  background: #fefefb;
  font-weight: 700;
  text-align: left;
  padding-left: 3px;
}

.last td:nth-child(-n+7) {
  border-bottom: 4px double #2a4484;
  line-height: 22px;
}

.total td {
  font-weight: 700;
}

tbody tr:nth-child(2) td:nth-child(3) {
  background: #fff;
}

/* frame around B2:F14 with its fill handle */
.selection {
  position: absolute;
  left: 158px;
  top: 67px;
  width: 603px;
  height: 523px;
  border: 2px solid var(--green);
}

.selection::after {
  content: "";
  position: absolute;
  right: -4px;
  bottom: -4px;
  width: 7px;
  height: 7px;
  background: var(--green);
  border: 1px solid #fff;
  box-sizing: content-box;
}

.vscroll {
  width: 23px;
  display: flex;
  flex-direction: column;
  align-items: center;
  padding: 8px 0 4px 7px;
  background: #efeeec;
}

.vtrack {
  flex: 1;
  padding: 7px 0;
}

.vthumb {
  width: 12px;
  height: 73%;
  border-radius: 6px;
  background: #51504e;
}

/* sheet tabs */
.sheet-bar {
  flex: none;
  height: 34px;
  display: flex;
  align-items: flex-start;
  background: #e1e4e1;
  border-top: 1px solid #8d8c8a;
}

.sheet-nav {
  width: 102px;
  height: 33px;
  margin-left: 16px;
  padding-left: 13px;
  display: flex;
  align-items: center;
  gap: 29px;
  background: #f1f1ef;
}

.sheet-tab {
  width: 80px;
  height: 31px;
  margin-top: -1px;
  background: #fefefb;
  border: solid #8d8c8a;
  border-width: 0 1px;
  border-bottom: 2px solid var(--green);
  color: var(--green);
  font-size: 19px;
  line-height: 28px;
  font-weight: 700;
}

.sheet-add {
  width: 68px;
  height: 33px;
  padding-left: 38px;
  background: #f1f1ef;
}

.sheet-bar .dots {
  margin: 9px 16px 0 auto;
}

.hscroll {
  width: 723px;
  height: 28px;
  margin: 1px 22px 0 0;
  padding: 0 6px;
  display: flex;
  align-items: center;
  gap: 8px;
  border-radius: 8px;
  background: #eeeeeb;
}

.htrack {
  flex: 1;
}

.hthumb {
  width: 93%;
  height: 12px;
  border-radius: 6px;
  background: #5b5a55;
}

.edge {
  flex: none;
  height: 4px;
  background: #9b9a98;
  border-top: 2px solid #fbfbf9;
  border-bottom: 1px solid #e8e8e6;
}

.bubble {
  position: absolute;
  right: 28px;
  bottom: 0;
  width: 106px;
  height: 26px;
  background: radial-gradient(circle at 50% 53px, rgba(252, 252, 248, 0.9) 52px, transparent 53px);
}

.pointer {
  position: absolute;
  z-index: 9;
  left: 947px;
  top: 76px;
}
```
